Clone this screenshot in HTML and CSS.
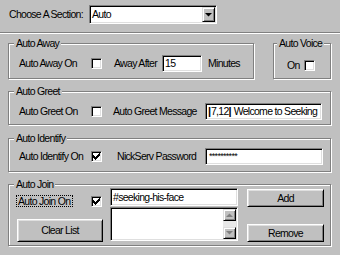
FILE: index.html
```html
<!DOCTYPE html>
<html lang="en">
<head>
  <meta charset="UTF-8">
  <title>Options - Auto</title>
  <link rel="stylesheet" href="styles.css">
</head>
<body>

  <!-- SECTION PICKER -->
  <div class="topbar">
    <span class="lbl lbl-section">Choose A Section:</span>
    <div class="combo">
      <span class="combo-text">Auto</span>
      <span class="combo-btn">
        <svg width="7" height="4" viewBox="0 0 7 4"><polygon points="0,0 7,0 3.5,3.5" fill="#000"/></svg>
      </span>
    </div>
  </div>
  <div class="sep"></div>

  <div class="panel">

    <!-- AUTO AWAY + AUTO VOICE -->
    <div class="group-row">
      <div class="group g-away">
        <span class="legend">Auto Away</span>
        <div class="row r-away">
          <span class="lbl w-first">Auto Away On</span>
          <span class="chk"></span>
          <span class="lbl lbl-after">Away After</span>
          <div class="field f-mins">15</div>
          <span class="lbl lbl-mins">Minutes</span>
        </div>
      </div>
      <div class="group g-voice">
        <span class="legend legend-tight">Auto Voice</span>
        <div class="row r-voice">
          <span class="lbl lbl-on">On</span>
          <span class="chk"></span>
        </div>
      </div>
    </div>

    <!-- AUTO GREET -->
    <div class="group g-greet">
      <span class="legend">Auto Greet</span>
      <div class="row r-greet">
        <span class="lbl w-first">Auto Greet On</span>
        <span class="chk"></span>
        <span class="lbl lbl-msg">Auto Greet Message</span>
        <div class="field f-wide f-greet"><b class="ctl">|</b>7,12<b class="ctl">|</b>&nbsp;Welcome to Seeking</div>
      </div>
    </div>

    <!-- AUTO IDENTIFY -->
    <div class="group g-ident">
      <span class="legend">Auto Identify</span>
      <div class="row r-ident">
        <span class="lbl w-first">Auto Identify On</span>
        <span class="chk checked">
          <svg width="7" height="7" viewBox="0 0 7 7" shape-rendering="crispEdges"><path d="M0 2h1v1h1v1h1v-1h1v-1h1v-1h1v-1h1v3h-1v1h-1v1h-1v1h-1v1h-1v-1h-1v-1h-1z" fill="#000"/></svg>
        </span>
        <span class="lbl lbl-pass">NickServ Password</span>
        <div class="field f-wide f-pass">**********</div>
      </div>
    </div>

    <!-- AUTO JOIN -->
    <div class="group g-join">
      <span class="legend">Auto Join</span>
      <div class="join-body">
        <div class="join-left">
          <div class="join-line">
            <span class="lbl focus">Auto Join On</span>
            <span class="chk checked">
              <svg width="7" height="7" viewBox="0 0 7 7" shape-rendering="crispEdges"><path d="M0 2h1v1h1v1h1v-1h1v-1h1v-1h1v-1h1v3h-1v1h-1v1h-1v1h-1v1h-1v-1h-1v-1h-1z" fill="#000"/></svg>
            </span>
          </div>
          <div class="btn btn-clear">Clear List</div>
        </div>
        <div class="join-mid">
          <div class="field f-chan">#seeking-his-face</div>
          <div class="list">
            <div class="vscroll">
              <span class="sbtn">
                <svg width="7" height="4" viewBox="0 0 7 4"><polygon points="0,4 7,4 3.5,0.5" fill="#808080"/></svg>
              </span>
              <span class="sbtn">
                <svg width="7" height="4" viewBox="0 0 7 4"><polygon points="0,0 7,0 3.5,3.5" fill="#808080"/></svg>
              </span>
            </div>
          </div>
        </div>
        <div class="join-right">
          <div class="btn btn-add">Add</div>
          <div class="btn btn-remove">Remove</div>
        </div>
      </div>
    </div>

  </div>

</body>
</html>
```

FILE: styles.css
```css
/* ===== GENERAL ===== */
body {
  margin: 0;
  width: 340px;
  height: 255px;
  overflow: hidden;
  background: #c0c0c0;
  color: #000;
  font-family: "Liberation Sans", Arial, sans-serif;
  font-size: 10.5px;
  letter-spacing: -0.7px;
  line-height: 13px;
}

.lbl {
  white-space: nowrap;
}

/* ===== SECTION PICKER ===== */
.topbar {
  display: flex;
  align-items: center;
  height: 19px;
  padding: 5px 0 8px 9px;
}
.lbl-section {
  width: 80px;
}
.combo {
  box-sizing: border-box;
  width: 128px;
  height: 19px;
  display: flex;
  align-items: center;
  background: #fff;
  border: 1px solid;
  border-color: #808080 #fff #fff #808080;
  box-shadow: inset 1px 1px #000, inset -1px -1px #dfdfdf;
}
.combo-text {
  flex: 1;
  padding-left: 2px;
}
.combo-btn {
  box-sizing: border-box;
  width: 13px;
  height: 15px;
  margin-right: 1px;
  display: flex;
  align-items: center;
  justify-content: center;
  background: #c0c0c0;
  border: 1px solid;
  border-color: #dfdfdf #000 #000 #dfdfdf;
  box-shadow: inset 1px 1px #fff, inset -1px -1px #808080;
}
.sep {
  border-top: 1px solid #808080;
  border-bottom: 1px solid #fff;
}

/* ===== GROUP BOXES ===== */
.panel {
  display: flex;
  flex-direction: column;
  padding: 9px 0 0 8px;
}
.group-row {
  display: flex;
  gap: 19px;
}
.group {
  box-sizing: border-box;
  display: flex;
  flex-direction: column;
  border: 1px solid #808080;
  box-shadow: inset 1px 1px #fff, 1px 1px #fff;
}
.legend {
  align-self: flex-start;
  margin: -7px 0 -6px 5px;
  padding: 0 2px;
  background: #c0c0c0;
  white-space: nowrap;
}
.legend-tight {
  margin-left: 3px;
}
.g-away  { width: 246px; height: 36px; }
.g-voice { width: 58px;  height: 36px; }
.g-greet { width: 323px; height: 34px; margin-top: 12px; }
.g-ident { width: 323px; height: 34px; margin-top: 13px; }
.g-join  { width: 323px; height: 62px; margin-top: 12px; }

.row {
  display: flex;
  align-items: center;
  height: 17px;
  padding-left: 10px;
}
.r-away  { margin-top: 11px; }
.r-voice { margin-top: 13px; padding-left: 13px; }
.r-greet { margin-top: 11px; }
.r-ident { margin-top: 9px; }

.w-first   { width: 72px; }
.lbl-after { margin-left: 12px; width: 48px; }
.lbl-mins  { margin-left: 6px; }
.lbl-on    { width: 17px; }
.lbl-msg   { margin-left: 11px; width: 92px; }
.lbl-pass  { margin-left: 15px; width: 88px; }

/* ===== CONTROLS ===== */
.chk {
  box-sizing: border-box;
  width: 11px;
  height: 11px;
  display: flex;
  align-items: center;
  justify-content: center;
  background: #fff;
  border: 1px solid;
  border-color: #808080 #fff #fff #808080;
  box-shadow: inset 1px 1px #000, inset -1px -1px #dfdfdf;
}
.field {
  box-sizing: border-box;
  height: 17px;
  padding-left: 2px;
  display: flex;
  align-items: center;
  overflow: hidden;
  white-space: nowrap;
  background: #fff;
  border: 1px solid;
  border-color: #808080 #fff #fff #808080;
  box-shadow: inset 1px 1px #000, inset -1px -1px #dfdfdf;
}
.f-mins  { width: 40px; }
.f-wide  { width: 117px; padding-left: 3px; }
.f-greet { padding-left: 2px; }
.f-pass  { width: 118px; align-items: flex-start; padding-top: 1px; font-size: 9px; }
.ctl {
  font-weight: bold;
  font-size: 11px;
  padding-right: 0.5px;
}

.btn {
  box-sizing: border-box;
  height: 18px;
  display: flex;
  align-items: center;
  justify-content: center;
  background: #c0c0c0;
  border: 1px solid;
  border-color: #fff #000 #000 #fff;
  box-shadow: inset 1px 1px #dfdfdf, inset -1px -1px #808080;
}

/* ===== AUTO JOIN ===== */
.join-body {
  display: flex;
  padding-left: 7px;
}
.join-left {
  width: 94px;
}
.join-line {
  display: flex;
  align-items: center;
  height: 12px;
  margin-top: 10px;
}
.focus {
  box-sizing: border-box;
  width: 57px;
  height: 12px;
  padding-left: 1px;
  line-height: 10px;
  border: 1px dotted #000;
  margin-right: 18px;
}
.btn-clear {
  width: 86px;
  height: 23px;
  margin: 12px 0 0 1px;
}
.join-mid {
  width: 128px;
}
.f-chan {
  width: 128px;
  height: 18px;
  margin-top: 3px;
}
.list {
  box-sizing: border-box;
  height: 34px;
  margin-top: 1px;
  display: flex;
  justify-content: flex-end;
  background: #fff;
  border: 1px solid;
  border-color: #808080 #fff #fff #808080;
  box-shadow: inset 1px 1px #000, inset -1px -1px #dfdfdf;
}
.vscroll {
  width: 13px;
  margin: 1px 1px 1px 0;
  display: flex;
  flex-direction: column;
  justify-content: space-between;
  background: #e8e8e8;
}
.sbtn {
  box-sizing: border-box;
  height: 12px;
  display: flex;
  align-items: center;
  justify-content: center;
  background: #c0c0c0;
  border: 1px solid;
  border-color: #dfdfdf #000 #000 #dfdfdf;
  box-shadow: inset 1px 1px #fff, inset -1px -1px #808080;
}
.join-right {
  width: 77px;
  margin-left: 9px;
}
.btn-add {
  margin-top: 4px;
}
.btn-remove {
  margin-top: 17px;
}
```
